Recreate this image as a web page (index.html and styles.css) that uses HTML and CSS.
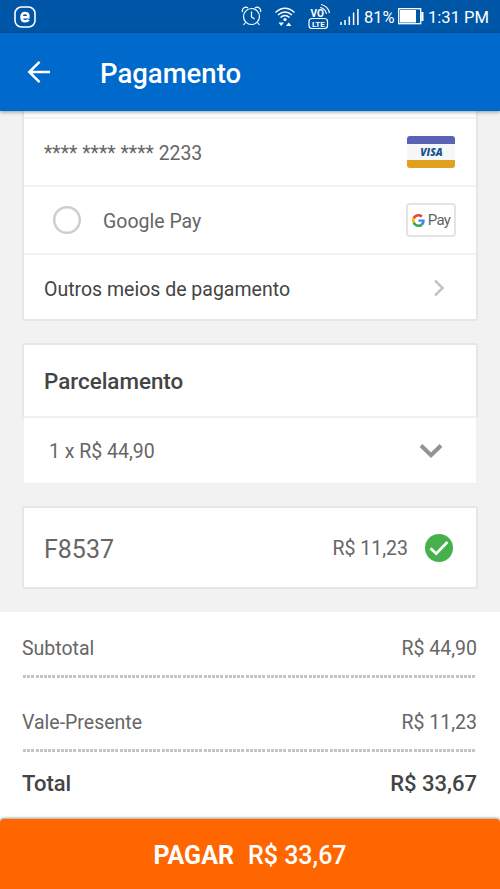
FILE: index.html
```html
<!DOCTYPE html>
<html lang="pt-BR">
<head>
<meta charset="utf-8">
<title>Pagamento</title>
<link rel="stylesheet" href="styles.css">
</head>
<body>
<div class="app">
  <div class="status">
    <svg class="status-app" width="22" height="22" viewBox="0 0 22 22" fill="none" stroke="#fff"><rect x="1" y="1" width="20" height="20" rx="6.500" stroke-width="1.600"/><path d="M7.500 11.200H14.300V9.800Q14.300 7 11 7Q7.500 7 7.500 11Q7.500 15.200 11 15.200Q13.500 15.200 14.800 13.800" stroke-width="2.600"/></svg>
    <svg class="status-icons" width="124" height="33" viewBox="0 0 124 33" fill="none" stroke="#fff" stroke-width="1.2">
      <circle cx="11.500" cy="16.500" r="8"/><path d="M11.500 11.500V17L14.500 19M5.500 22.500L3.500 25M17.500 22.500L19.500 25M2.500 12C1.500 8.500 5 6 8 8M20.500 12C21.500 8.500 18 6 15 8"/>
      <path d="M35.500 12.500Q45 4 54.500 12.500M38 15Q45 9 52 15M40.500 17.500Q45 13.500 49.500 17.500" stroke-width="1.500"/><circle cx="45" cy="19.500" r="1.600" fill="#fff" stroke="none"/><path d="M38.500 22.500H44L41.200 26ZM46 26H51.500L48.700 22.500Z" fill="#fff" stroke="none"/>
      <rect x="69" y="18.500" width="18.500" height="10" rx="3"/>
      <path d="M80 7.500Q85.500 8.500 86.500 14M81 4.500Q88 6 89.500 13"/>
      <text class="vo" x="70.500" y="17">VO</text><text class="lte" x="71.900" y="26.500">LTE</text>
      <path d="M101 22V25M105 20V25M109.300 16.500V25M113.600 12.500V25M117.900 9V25" stroke-width="1.500"/>
    </svg>
    <span class="battery-text">81%</span>
    <svg class="battery" width="26" height="17" viewBox="0 0 26 17"><rect x=".7" y=".7" width="22" height="15" fill="none" stroke="#fff" stroke-width="1.300"/><path d="M2 2H18V14.500H2ZM23.200 4H25.500V13H23.200Z" fill="#fff"/></svg>
    <span class="clock">1:31 PM</span>
  </div>
  <header class="bar">
    <svg width="24" height="24" viewBox="0 0 24 24" fill="none" stroke="#fff" stroke-width="2.500"><path d="M23 12H3M12.500 1.800L2.300 12L12.500 22.200"/></svg>
    <h1 class="t-title">Pagamento</h1>
  </header>
  <main class="content">
    <section class="card methods">
      <div class="row">
        <span class="t-card">**** **** **** 2233</span>
        <svg class="visa" width="48" height="32" viewBox="0 0 48 32"><rect width="48" height="32" rx="3" fill="#f6f7f9"/><path d="M0 8V3Q0 0 3 0H45Q48 0 48 3V8Z" fill="#5864b3"/><path d="M0 24H48V29Q48 32 45 32H3Q0 32 0 29Z" fill="#e0a021"/><text x="13.300" y="20" textLength="22.500" lengthAdjust="spacingAndGlyphs">VISA</text></svg>
      </div>
      <div class="row google">
        <span class="radio"></span>
        <span class="t-gpay">Google Pay</span>
        <span class="gpay"><svg width="13" height="13" viewBox="0 0 48 48"><path fill="#ea4335" d="M24 9.500c3.500 0 6.700 1.200 9.200 3.600l6.900-6.900C35.900 2.400 30.500 0 24 0 14.600 0 6.500 5.400 2.600 13.200l8 6.200C12.400 13.700 17.700 9.500 24 9.500z"/><path fill="#4285f4" d="M47 24.600c0-1.600-.2-3.100-.4-4.600H24v9h12.900c-.6 3-2.300 5.500-4.800 7.200l7.700 6C44.400 38 47 31.800 47 24.600z"/><path fill="#fbbc05" d="M10.500 28.600a14.500 14.500 0 0 1 0-9.200l-8-6.200a24 24 0 0 0 0 21.600l8-6.200z"/><path fill="#34a853" d="M24 48c6.500 0 11.900-2.100 15.900-5.800l-7.700-6c-2.200 1.400-4.900 2.300-8.200 2.300-6.300 0-11.600-4.200-13.500-9.900l-8 6.200C6.500 42.600 14.600 48 24 48z"/></svg><span>Pay</span></span>
      </div>
      <div class="row">
        <span class="t-other">Outros meios de pagamento</span>
        <svg class="next" width="12" height="18" viewBox="0 0 12 18" fill="none" stroke="#c4c4c4" stroke-width="2.600"><path d="M2 1.500L9.500 9L2 16.500"/></svg>
      </div>
    </section>
    <section class="installments">
      <div class="install-head"><h2 class="t-install">Parcelamento</h2></div>
      <div class="install-option"><span class="t-option">1 x R$ 44,90</span><svg width="24" height="16" viewBox="0 0 24 16" fill="none" stroke="#939393" stroke-width="4"><path d="M2 2.500L12 12.300L22 2.500"/></svg></div>
    </section>
    <section class="card voucher">
      <span class="t-code">F8537</span>
      <span class="t-voucher">R$ 11,23</span>
      <svg width="28" height="28" viewBox="0 0 28 28"><circle cx="14" cy="14" r="14" fill="#45b04c"/><path d="M5.500 14.300L11.200 19.700L22.500 8" fill="none" stroke="#fff" stroke-width="2.700"/></svg>
    </section>
  </main>
  <section class="summary">
    <div class="line"><span class="t-sub">Subtotal</span><span class="t-amount">R$ 44,90</span></div>
    <div class="dots"></div>
    <div class="line second"><span class="t-vale">Vale-Presente</span><span class="t-amount">R$ 11,23</span></div>
    <div class="dots"></div>
    <div class="line total"><span class="t-total">Total</span><span class="t-sum">R$ 33,67</span></div>
  </section>
  <button class="pay"><b>PAGAR</b><span>R$ 33,67</span></button>
</div>
</body>
</html>
```

FILE: styles.css
```css
* { box-sizing: border-box; }
body { margin: 0; font-family: Roboto, "Liberation Sans", sans-serif; color: #666; background: #fff; }
h1, h2 { margin: 0; font-weight: 500; }
svg { display: block; flex: none; }
span, h1, h2 { white-space: nowrap; }
.app { width: 500px; height: 889px; display: flex; flex-direction: column; overflow: hidden; }
.status { height: 33px; flex: none; display: flex; align-items: center; background: #0056a6; color: #fff; font-size: 17px; padding: 0 11px 0 14px; }
.status-icons { margin-left: auto; margin-right: 0; }
.battery-text, .clock { padding-top: 1px; }
.vo { font: 700 10px Roboto, sans-serif; fill: #fff; stroke: none; }
.lte { font: 700 8px Roboto, sans-serif; fill: #fff; stroke: none; }
.battery-text { width: 34px; font-size: 16.500px; }
.battery { margin-right: 4px; }
.clock { width: 61px; font-size: 16.600px; }
.bar { height: 78px; flex: none; display: flex; align-items: center; gap: 49px; padding-left: 27px; background: #0069cc; color: #fff; box-shadow: 0 1px 4px rgba(0,0,0,.4); z-index: 1; }
.t-title { font-size: 27.500px; padding-top: 3px; }
.content { height: 501px; flex: none; background: #f2f2f2; padding: 0 22px; }
.card { background: #fff; border: 2px solid #e6e6e6; border-radius: 3px; }
.methods { border-top: 0; border-radius: 0 0 3px 3px; height: 210px; padding-top: 6px; }
.row { height: 68px; display: flex; align-items: center; justify-content: space-between; padding: 0 20px; border-top: 2px solid #f2f2f2; font-size: 19.500px; }
.t-card, .t-gpay, .t-other { padding-top: 2px; }
.t-card { font-size: 19.400px; }
.visa { margin-right: 1px; }
.visa text { font: italic 800 11px "Open Sans", sans-serif; fill: #17568a; }
.google { justify-content: flex-start; padding-left: 29px; }
.radio { width: 28px; height: 28px; border: 2.500px solid #ccc; border-radius: 50%; margin-right: 22px; box-shadow: inset 0 0 0 .5px #ccc; }
.gpay { margin-left: auto; width: 50px; height: 34px; border: 2px solid #e4e4e4; border-radius: 4px; display: flex; align-items: center; justify-content: center; gap: 3px; font: 15px Roboto, sans-serif; color: #5f6368; letter-spacing: -.6px; }
.t-other { color: #444; }
.next { margin-right: 11px; }
.installments { margin-top: 22px; }
.install-head { height: 75px; background: #fff; border: 2px solid #e6e6e6; border-bottom-color: #f0f0f0; border-radius: 3px 3px 0 0; padding: 0 20px; display: flex; align-items: center; }
.t-install { font-size: 22.400px; color: #444; padding-top: 1px; }
.install-option { height: 66px; margin: 0 1px; background: #fff; border: solid #f0f0f0; border-width: 0 1px 1px; padding: 0 33px 0 25px; display: flex; align-items: center; justify-content: space-between; font-size: 19.500px; }
.t-option { padding-top: 2px; }
.voucher { height: 83px; margin-top: 22px; display: flex; align-items: center; padding: 0 23px 0 20px; font-size: 19.500px; }
.t-voucher { padding-top: 2px; }
.t-code { font-size: 25px; margin-right: auto; padding-top: 3px; }
.voucher svg { margin-left: 17px; }
.summary { height: 207px; flex: none; padding: 0 23px 0 22px; background: #fff; }
.line { height: 63px; padding-top: 9px; display: flex; align-items: center; justify-content: space-between; font-size: 19.500px; }
.second { height: 71px; padding-top: 17px; }
.total { height: 66px; padding: 0 0 3px; font-size: 22px; font-weight: 500; color: #444; }
.dots { height: 3px; margin-left: 1px; background: repeating-linear-gradient(90deg, #c5c5c5 0 3px, #fff 3px 4.200px); }
.pay { height: 70px; flex: none; border: 0; border-radius: 4px 4px 0 0; background: #ff6600; color: #fff; box-shadow: 0 -1px 3px rgba(0,0,0,.4); display: flex; align-items: center; justify-content: center; gap: 14px; font: 500 25px Roboto, sans-serif; padding: 3px 0 0; }
.pay b { font-weight: 700; }
```
